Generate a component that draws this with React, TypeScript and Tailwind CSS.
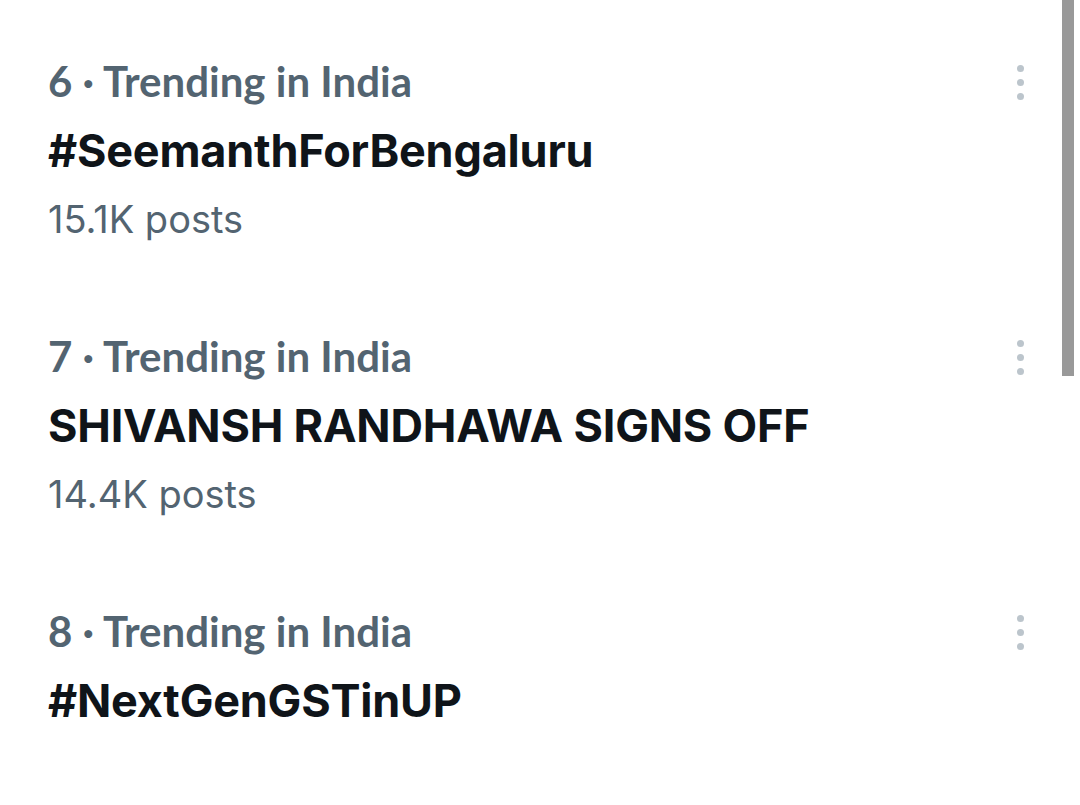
const trends = [
  { rank: 6, title: '#SeemanthForBengaluru', posts: '15.1K posts' },
  { rank: 7, title: 'SHIVANSH RANDHAWA SIGNS OFF', posts: '14.4K posts' },
  { rank: 8, title: '#NextGenGSTinUP', posts: '' },
];

function MoreIcon() {
  return (
    <div className="flex flex-col items-center gap-[7px] pt-[8px]">
      <span className="block w-[7px] h-[7px] rounded-full bg-[#bcc5cc]" />
      <span className="block w-[7px] h-[7px] rounded-full bg-[#bcc5cc]" />
      <span className="block w-[7px] h-[7px] rounded-full bg-[#bcc5cc]" />
    </div>
  );
}

export default function App() {
  return (
    <div className="relative w-[1080px] h-[805px] overflow-hidden bg-white">
      <div className="flex flex-col pl-[48px] pr-[56px] pt-[57px]">
        {trends.map((t) => (
          <div key={t.rank} className="flex justify-between h-[275px]">
            <div className="flex flex-col">
              <div className="font-['Lato'] font-bold text-[42px] leading-[48px] text-[#536471]">
                {t.rank} · Trending in India
              </div>
              <div className="font-['Inter'] font-bold text-[45px] leading-[48px] mt-[22px] text-[#0f1419] tracking-[-0.2px]">
                {t.title}
              </div>
              {t.posts && (
                <div className="font-['Inter'] text-[38px] leading-[48px] mt-[20px] text-[#536471]">
                  {t.posts}
                </div>
              )}
            </div>
            <MoreIcon />
          </div>
        ))}
      </div>
      <div className="absolute right-[6px] top-0 w-[12px] h-[376px] bg-[#999999]" />
    </div>
  );
}
